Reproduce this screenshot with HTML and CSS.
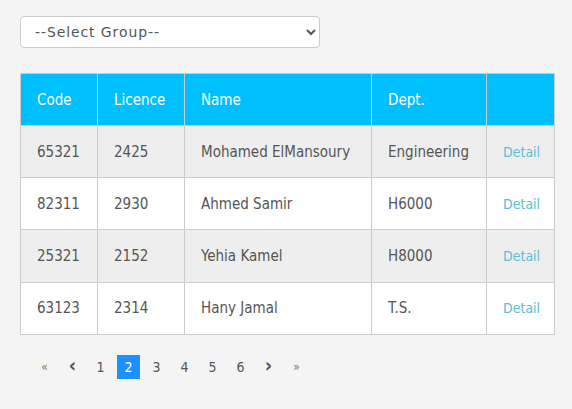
FILE: index.html
```html
<!DOCTYPE html>
<html>
<head>
<meta charset="utf-8">
<link rel="stylesheet" href="styles.css">
</head>
<body>
<div class="page">
  <div class="select-wrap">
    <select class="group-select">
      <option>--Select Group--</option>
    </select>
  </div>
  <table class="grid">
    <thead>
      <tr>
        <th class="c1">Code</th>
        <th class="c2">Licence</th>
        <th class="c3">Name</th>
        <th class="c4">Dept.</th>
        <th class="c5"></th>
      </tr>
    </thead>
    <tbody>
      <tr class="odd"><td>65321</td><td>2425</td><td>Mohamed ElMansoury</td><td>Engineering</td><td><a class="detail">Detail</a></td></tr>
      <tr><td>82311</td><td>2930</td><td>Ahmed Samir</td><td>H6000</td><td><a class="detail">Detail</a></td></tr>
      <tr class="odd"><td>25321</td><td>2152</td><td>Yehia Kamel</td><td>H8000</td><td><a class="detail">Detail</a></td></tr>
      <tr><td>63123</td><td>2314</td><td>Hany Jamal</td><td>T.S.</td><td><a class="detail">Detail</a></td></tr>
    </tbody>
  </table>
  <ul class="pager">
    <li class="pg edge">&laquo;</li>
    <li class="pg arrow">&#x2039;</li>
    <li class="pg">1</li>
    <li class="pg active">2</li>
    <li class="pg">3</li>
    <li class="pg">4</li>
    <li class="pg">5</li>
    <li class="pg">6</li>
    <li class="pg arrow">&#x203A;</li>
    <li class="pg edge">&raquo;</li>
  </ul>
</div>
</body>
</html>
```
FILE: styles.css
```css
html, body {
  margin: 0;
  padding: 0;
  background: #f4f4f4;
}
body {
  font-family: "DejaVu Sans", sans-serif;
  font-stretch: condensed;
  color: #555;
}
.page {
  padding: 16px 18px 0 20px;
}
.select-wrap {
  margin-bottom: 25px;
}
.group-select {
  width: 300px;
  height: 32px;
  border: 1px solid #ccc;
  border-radius: 4px;
  background: #fff;
  font-family: "DejaVu Sans", sans-serif;
  font-stretch: normal;
  font-size: 14px;
  letter-spacing: 0.9px;
  color: #555;
  padding: 0 10px;
}
.grid {
  border-collapse: collapse;
  width: 535px;
  font-size: 15px;
}
.grid th, .grid td {
  border: 1px solid #ccc;
  height: 51.2px;
  padding: 0 0 0 16px;
  text-align: left;
  vertical-align: middle;
}
.grid th {
  background: #00bfff;
  color: #fff;
  font-weight: normal;
  height: 51px;
}
.c1 { width: 60px; }
.c2 { width: 70px; }
.c3 { width: 170px; }
.c4 { width: 98px; }
.grid td { background: #fff; }
.grid tr.odd td { background: #eee; }
.detail {
  color: #5bbcd6;
  font-size: 14px;
}
.pager {
  list-style: none;
  display: flex;
  margin: 20px 0 0 13px;
  padding: 0;
  gap: 5px;
}
.pg {
  width: 23px;
  height: 24px;
  display: flex;
  align-items: center;
  justify-content: center;
  font-size: 14px;
  color: #555;
}
.pg.active {
  background: #1e90ff;
  color: #fff;
}
.pg.edge {
  color: #a07050;
  font-size: 12px;
}
.pg.arrow {
  font-size: 20px;
  font-weight: bold;
  padding-bottom: 3px;
  box-sizing: border-box;
}
```
